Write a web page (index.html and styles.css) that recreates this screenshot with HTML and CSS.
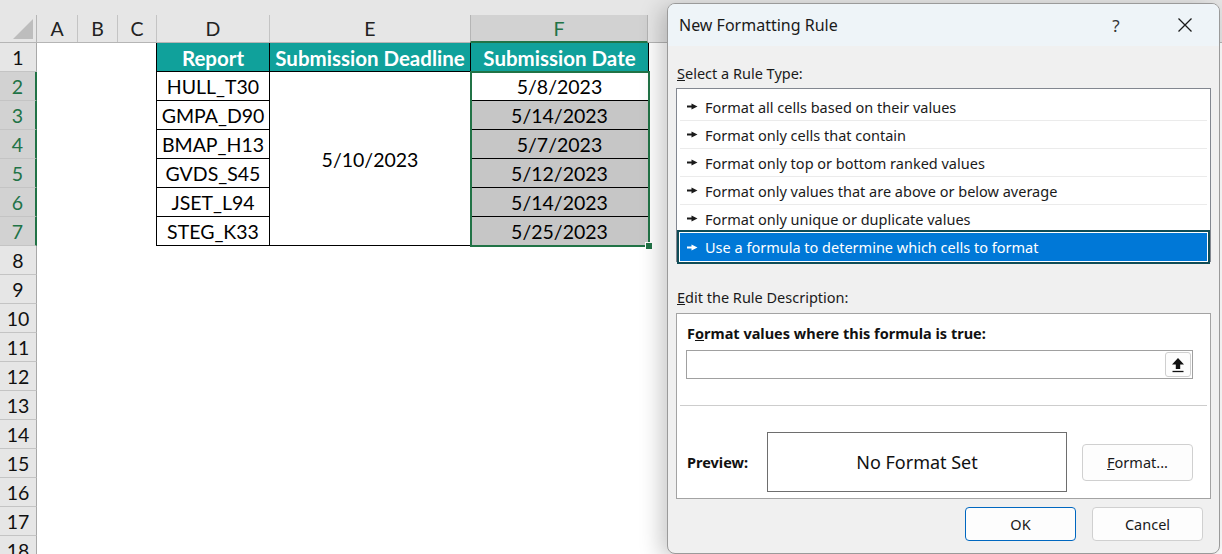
FILE: index.html
```html
<!DOCTYPE html>
<html>
<head>
<meta charset="utf-8">
<link rel="stylesheet" href="styles.css">
</head>
<body>
<div class="sheet">
  <div class="band"></div>
  <div class="colhead">
    <div class="ch corner"><span class="tri"></span></div>
    <div class="ch wA">A</div>
    <div class="ch wB">B</div>
    <div class="ch wC">C</div>
    <div class="ch wD">D</div>
    <div class="ch wE">E</div>
    <div class="ch wF active">F</div>
    <div class="ch wG"></div>
  </div>
  <div class="sbody">
    <div class="rowheads">
      <div class="rh">1</div>
      <div class="rh sel">2</div>
      <div class="rh sel">3</div>
      <div class="rh sel">4</div>
      <div class="rh sel">5</div>
      <div class="rh sel">6</div>
      <div class="rh sel">7</div>
      <div class="rh">8</div>
      <div class="rh">9</div>
      <div class="rh">10</div>
      <div class="rh">11</div>
      <div class="rh">12</div>
      <div class="rh">13</div>
      <div class="rh">14</div>
      <div class="rh">15</div>
      <div class="rh">16</div>
      <div class="rh">17</div>
      <div class="rh">18</div>
    </div>
    <div class="cells">
      <div class="tbl">
        <div class="c hd">Report</div>
        <div class="c hd">Submission Deadline</div>
        <div class="c hd">Submission Date</div>
        <div class="c">HULL_T30</div>
        <div class="c merged">5/10/2023</div>
        <div class="fsel">
          <div class="c">5/8/2023</div>
          <div class="c gray">5/14/2023</div>
          <div class="c gray">5/7/2023</div>
          <div class="c gray">5/12/2023</div>
          <div class="c gray">5/14/2023</div>
          <div class="c gray">5/25/2023</div>
          <div class="selbox"><span class="handle"></span></div>
        </div>
        <div class="c">GMPA_D90</div>
        <div class="c">BMAP_H13</div>
        <div class="c">GVDS_S45</div>
        <div class="c">JSET_L94</div>
        <div class="c">STEG_K33</div>
      </div>
    </div>
  </div>
</div>

<div class="dlg">
  <div class="titlebar">
    <div class="ttl">New Formatting Rule</div>
    <div class="help">?</div>
    <div class="close">
      <svg width="16" height="16" viewBox="0 0 16 16"><path d="M1.5 1.5 L14.5 14.5 M14.5 1.5 L1.5 14.5" stroke="#1b1b1b" stroke-width="1.3" fill="none"/></svg>
    </div>
  </div>
  <div class="dbody">
    <div class="lbl lbl1"><u>S</u>elect a Rule Type:</div>
    <div class="list">
      <div class="item"><svg class="arr" width="11" height="7" viewBox="0 0 11 7"><path d="M0 3.5 H5" stroke="currentColor" stroke-width="2"/><path d="M4.5 0.6 L10.5 3.5 L4.5 6.4 Z" fill="currentColor"/></svg>Format all cells based on their values</div>
      <div class="item"><svg class="arr" width="11" height="7" viewBox="0 0 11 7"><path d="M0 3.5 H5" stroke="currentColor" stroke-width="2"/><path d="M4.5 0.6 L10.5 3.5 L4.5 6.4 Z" fill="currentColor"/></svg>Format only cells that contain</div>
      <div class="item"><svg class="arr" width="11" height="7" viewBox="0 0 11 7"><path d="M0 3.5 H5" stroke="currentColor" stroke-width="2"/><path d="M4.5 0.6 L10.5 3.5 L4.5 6.4 Z" fill="currentColor"/></svg>Format only top or bottom ranked values</div>
      <div class="item"><svg class="arr" width="11" height="7" viewBox="0 0 11 7"><path d="M0 3.5 H5" stroke="currentColor" stroke-width="2"/><path d="M4.5 0.6 L10.5 3.5 L4.5 6.4 Z" fill="currentColor"/></svg>Format only values that are above or below average</div>
      <div class="item"><svg class="arr" width="11" height="7" viewBox="0 0 11 7"><path d="M0 3.5 H5" stroke="currentColor" stroke-width="2"/><path d="M4.5 0.6 L10.5 3.5 L4.5 6.4 Z" fill="currentColor"/></svg>Format only unique or duplicate values</div>
      <div class="item selected"><svg class="arr" width="11" height="7" viewBox="0 0 11 7"><path d="M0 3.5 H5" stroke="currentColor" stroke-width="2"/><path d="M4.5 0.6 L10.5 3.5 L4.5 6.4 Z" fill="currentColor"/></svg>Use a formula to determine which cells to format</div>
    </div>
    <div class="lbl lbl2"><u>E</u>dit the Rule Description:</div>
    <div class="desc">
      <div class="blbl">F<u>o</u>rmat values where this formula is true:</div>
      <div class="input">
        <div class="upbtn">
          <svg width="14" height="16" viewBox="0 0 14 16"><path d="M7 1 L13 7.5 H9.2 V12 H4.8 V7.5 H1 Z" fill="#111"/><path d="M1.5 14.5 H12.5" stroke="#111" stroke-width="1.3"/></svg>
        </div>
      </div>
      <div class="sep"></div>
      <div class="prow">
        <div class="plbl">Preview:</div>
        <div class="pbox">No Format Set</div>
        <div class="btn fmt"><u>F</u>ormat...</div>
      </div>
    </div>
    <div class="btnrow">
      <div class="btn ok">OK</div>
      <div class="btn">Cancel</div>
    </div>
  </div>
</div>
</body>
</html>
```
FILE: styles.css
```css
html, body {
  margin: 0;
  padding: 0;
}
body {
  width: 1222px;
  height: 554px;
  overflow: hidden;
  position: relative;
  background: #ffffff;
  font-family: Lato, "Liberation Sans", sans-serif;
  color: #000;
}

/* ---------- spreadsheet ---------- */
.sheet {
  display: flex;
  flex-direction: column;
}
.band {
  height: 15px;
  background: #e6e6e6;
}
.colhead {
  display: flex;
  height: 28px;
  box-sizing: border-box;
  background: #e6e6e6;
  border-bottom: 1px solid #b5b5b5;
}
.ch {
  box-sizing: border-box;
  height: 27px;
  border-right: 1px solid #c4c4c4;
  display: flex;
  align-items: center;
  justify-content: center;
  font-size: 19.5px;
  color: #222;
}
.corner {
  width: 37px;
  position: relative;
  border-right: 1px solid #b5b5b5;
}
.tri {
  position: absolute;
  right: 3px;
  bottom: 3px;
  width: 0;
  height: 0;
  border-left: 20px solid transparent;
  border-bottom: 20px solid #bdbdbd;
}
.wA { width: 41px; }
.wB { width: 40px; }
.wC { width: 39px; }
.wD { width: 113px; }
.wE { width: 201px; }
.wF { width: 178px; }
.wG { flex: 1; border-right: none; }
.ch.active {
  background: #d2d2d2;
  color: #217346;
  height: 28px;
  border-bottom: 2px solid #217346;
  border-right: 1px solid #b5b5b5;
  border-left: 1px solid #b5b5b5;
  margin-left: -1px;
}

.sbody {
  display: flex;
}
.rowheads {
  width: 37px;
  display: flex;
  flex-direction: column;
}
.rh {
  box-sizing: border-box;
  height: 29px;
  background: #e6e6e6;
  border-bottom: 1px solid #c4c4c4;
  border-right: 1px solid #a8a8a8;
  display: flex;
  align-items: center;
  justify-content: center;
  font-size: 19.5px;
  padding-top: 1px;
  color: #111;
}
.rh.sel {
  background: #d2d2d2;
  color: #217346;
  border-right: 2px solid #217346;
}
.cells {
  flex: 1;
  padding-left: 119px;
}
.tbl {
  display: grid;
  grid-template-columns: 114px 201px 178px;
  grid-template-rows: repeat(7, 29px);
  width: max-content;
}
.c {
  box-sizing: border-box;
  border-right: 1px solid #000;
  border-bottom: 1px solid #000;
  display: flex;
  align-items: center;
  justify-content: center;
  font-size: 19.5px;
  padding-top: 1px;
  white-space: nowrap;
  height: 29px;
}
.tbl > .c:nth-child(3n+1),
.tbl > .c.hd:first-child {
  border-left: 1px solid #000;
}
.tbl > .c:nth-child(n+6) {
  border-left: 1px solid #000;
}
.hd {
  background: #10a19b;
  color: #fff;
  font-weight: 700;
  font-size: 20.5px;
}
.hd + .hd {
  border-left: none;
}
.merged {
  grid-column: 2;
  grid-row: 2 / span 6;
  height: auto;
}
.fsel {
  grid-column: 3;
  grid-row: 2 / span 6;
  display: flex;
  flex-direction: column;
  position: relative;
}
.gray {
  background: #c6c6c6;
}
.selbox {
  position: absolute;
  left: -1px;
  top: -1px;
  right: -1px;
  bottom: -1px;
  border: 2px solid #217346;
  pointer-events: none;
}
.handle {
  position: absolute;
  right: -5px;
  bottom: -5px;
  width: 6px;
  height: 6px;
  background: #217346;
  border: 1px solid #fff;
}

/* ---------- dialog ---------- */
.dlg {
  position: absolute;
  left: 667px;
  top: 3px;
  width: 553px;
  height: 551px;
  box-sizing: border-box;
  border: 1px solid #9a9a9a;
  border-radius: 8px;
  background: #f0f0f0;
  box-shadow: -6px 4px 22px rgba(0, 0, 0, 0.22);
  font-family: "Noto Sans", "Open Sans", sans-serif;
  color: #1a1a1a;
  overflow: hidden;
}
.titlebar {
  height: 42px;
  background: #eef4f8;
  display: flex;
  align-items: center;
  padding-left: 11px;
}
.ttl {
  font-size: 16px;
  flex: 1;
  color: #1a1a1a;
}
.help {
  font-size: 17px;
  width: 20px;
  text-align: center;
  margin-right: 51px;
  color: #333;
}
.close {
  width: 16px;
  height: 16px;
  margin-right: 26px;
  display: flex;
}
.dbody {
  padding: 0 8px;
}
.lbl {
  font-size: 14.5px;
  line-height: 20px;
  padding-left: 1px;
}
.lbl1 {
  margin-top: 17px;
}
.list {
  margin-top: 5px;
  height: 174px;
  box-sizing: border-box;
  border: 1px solid #828790;
  background: #fff;
  padding: 4px 3px;
}
.item {
  height: 28px;
  box-sizing: border-box;
  border-bottom: 1px solid #ebebeb;
  display: flex;
  align-items: center;
  padding-left: 7px;
  font-size: 14.5px;
  color: #1a1a1a;
  white-space: nowrap;
}
.arr {
  margin-right: 7px;
  color: #1a1a1a;
}
.item.selected {
  background: #0078d7;
  color: #fff;
  border-bottom: none;
  box-shadow: 0 0 0 1px #fff, 0 0 0 3px #0f4c57;
}
.item.selected .arr {
  color: #fff;
}
.lbl2 {
  margin-top: 25px;
}
.desc {
  margin-top: 6px;
  height: 186px;
  box-sizing: border-box;
  border: 1px solid #a3a3a3;
  background: #fff;
  padding: 9px 3px 0 3px;
}
.blbl {
  font-size: 14.5px;
  font-weight: 700;
  line-height: 20px;
  padding-left: 7px;
  color: #111;
}
.input {
  margin: 7px 0 0 6px;
  width: 507px;
  height: 29px;
  box-sizing: border-box;
  border: 1px solid #a0a0a0;
  display: flex;
  justify-content: flex-end;
  align-items: center;
  padding-right: 1px;
}
.upbtn {
  width: 26px;
  height: 25px;
  box-sizing: border-box;
  border: 1px solid #cfcfcf;
  border-radius: 3px;
  background: #fdfdfd;
  display: flex;
  align-items: center;
  justify-content: center;
}
.sep {
  margin-top: 26px;
  height: 1px;
  background: #cdcdcd;
}
.prow {
  margin-top: 26px;
  display: flex;
  align-items: center;
}
.plbl {
  font-size: 14.5px;
  font-weight: 700;
  width: 87px;
  padding-left: 7px;
  box-sizing: border-box;
  color: #111;
}
.pbox {
  width: 300px;
  height: 60px;
  box-sizing: border-box;
  border: 1px solid #6e6e6e;
  display: flex;
  align-items: center;
  justify-content: center;
  font-size: 18px;
  color: #111;
}
.btn {
  width: 111px;
  height: 34px;
  box-sizing: border-box;
  border: 1px solid #d0d0d0;
  border-radius: 4px;
  background: #fdfdfd;
  display: flex;
  align-items: center;
  justify-content: center;
  font-size: 14.5px;
  color: #1a1a1a;
}
.fmt {
  margin-left: 15px;
  height: 37px;
}
.btnrow {
  margin-top: 8px;
  display: flex;
  justify-content: flex-end;
  gap: 16px;
  padding-right: 8px;
}
.btn.ok {
  border: 1px solid #0067c0;
}
```
